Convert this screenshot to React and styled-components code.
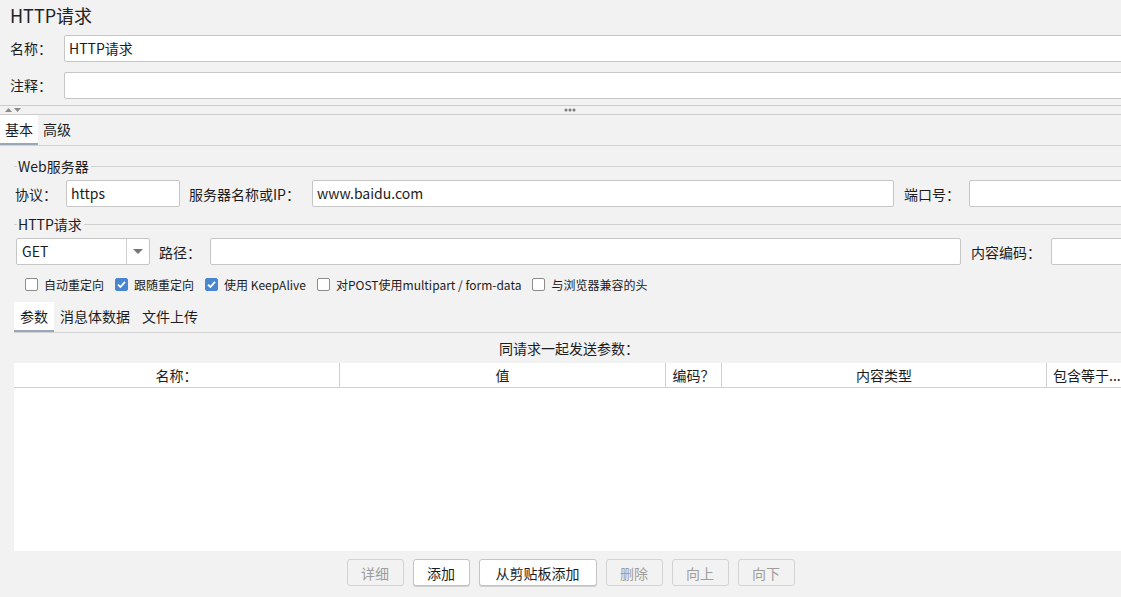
import React from 'react';
import styled, { createGlobalStyle } from 'styled-components';

const GlobalStyle = createGlobalStyle`
	html, body {
		margin: 0;
		padding: 0;
		background: #f2f2f2;
		overflow: hidden;
	}
	body {
		font-family: 'Noto Sans CJK SC', 'Noto Sans', sans-serif;
		color: #1c1c1c;
	}
`;

function Check({ checked }) {
	return (
		<CheckBox checked={checked}>
			{checked && (
				<svg width="11" height="11" viewBox="0 0 11 11">
					<path d="M2 5.6 L4.4 8 L9 2.8" fill="none" stroke="#fff" strokeWidth="1.8" />
				</svg>
			)}
		</CheckBox>
	);
}

function App() {
	return (
		<Page>
			<GlobalStyle />
			<Title>HTTP请求</Title>
			<FieldRow $top={5}>
				<FieldLabel>名称：</FieldLabel>
				<TextBox $grow>HTTP请求</TextBox>
			</FieldRow>
			<FieldRow $top={10}>
				<FieldLabel>注释：</FieldLabel>
				<TextBox $grow />
			</FieldRow>

			<Splitter>
				<Arrows>
					<svg width="20" height="6" viewBox="0 0 20 6">
						<path d="M2 5 L5.5 1 L9 5 Z" fill="#8a8a8a" />
						<path d="M11 1 L14.5 5 L18 1 Z" fill="#8a8a8a" />
					</svg>
				</Arrows>
				<Dots>
					<svg width="12" height="4" viewBox="0 0 12 4">
						<circle cx="2" cy="2" r="1.5" fill="#7a7a7a" />
						<circle cx="6" cy="2" r="1.5" fill="#7a7a7a" />
						<circle cx="10" cy="2" r="1.5" fill="#7a7a7a" />
					</svg>
				</Dots>
			</Splitter>

			<TabBar>
				<Tab $active>基本</Tab>
				<Tab>高级</Tab>
			</TabBar>

			<Body>
				<Legend $top={10}>Web服务器</Legend>
				<Row>
					<Label $w={52}>协议：</Label>
					<TextBox $w={114}>https</TextBox>
					<Label $w={124} $gap={8}>服务器名称或IP：</Label>
					<TextBox $grow>www.baidu.com</TextBox>
					<Label $w={66} $gap={9}>端口号：</Label>
					<TextBox $w={155} />
				</Row>

				<Legend $top={7}>HTTP请求</Legend>
				<Row>
					<Select>
						<span>GET</span>
						<SelectArrow>
							<svg width="10" height="6" viewBox="0 0 10 6">
								<path d="M0 0 L10 0 L5 5 Z" fill="#777" />
							</svg>
						</SelectArrow>
					</Select>
					<Label $w={52} $gap={8}>路径：</Label>
					<TextBox $grow />
					<Label $w={81} $gap={9}>内容编码：</Label>
					<TextBox $w={73} />
				</Row>

				<Checks>
					<CheckItem><Check />自动重定向</CheckItem>
					<CheckItem><Check checked />跟随重定向</CheckItem>
					<CheckItem><Check checked />使用 KeepAlive</CheckItem>
					<CheckItem><Check />对POST使用multipart / form-data</CheckItem>
					<CheckItem><Check />与浏览器兼容的头</CheckItem>
				</Checks>

				<SubTabBar>
					<Tab $active>参数</Tab>
					<Tab>消息体数据</Tab>
					<Tab>文件上传</Tab>
				</SubTabBar>

				<Caption>同请求一起发送参数：</Caption>

				<Table>
					<HeaderRow>
						<HeadCell>名称：</HeadCell>
						<HeadCell>值</HeadCell>
						<HeadCell>编码？</HeadCell>
						<HeadCell>内容类型</HeadCell>
						<HeadCell $left>包含等于...</HeadCell>
					</HeaderRow>
					<TableBody />
				</Table>

				<Buttons>
					<Button disabled>详细</Button>
					<Button>添加</Button>
					<Button $wide>从剪贴板添加</Button>
					<Button disabled>删除</Button>
					<Button disabled>向上</Button>
					<Button disabled>向下</Button>
				</Buttons>
			</Body>
		</Page>
	);
}

const Page = styled.div`
	width: 1121px;
	height: 597px;
	overflow: hidden;
	background: #f2f2f2;
	font-size: 14px;
`;

const Title = styled.div`
	height: 30px;
	line-height: 30px;
	padding-left: 10px;
	font-size: 18px;
	color: #222;
`;

const FieldRow = styled.div`
	display: flex;
	align-items: center;
	margin-top: ${(p) => p.$top}px;
	margin-right: -4px;
`;

const FieldLabel = styled.div`
	width: 54px;
	padding-left: 10px;
	flex-shrink: 0;
	line-height: 27px;
`;

const TextBox = styled.div`
	box-sizing: border-box;
	height: 27px;
	line-height: 25px;
	padding: 0 4px;
	background: #fff;
	border: 1px solid #c6c6c6;
	border-radius: 2px;
	white-space: nowrap;
	flex: ${(p) => (p.$grow ? '1 1 0' : '0 0 auto')};
	width: ${(p) => (p.$w ? `${p.$w}px` : 'auto')};
	min-width: 0;
`;

const Splitter = styled.div`
	position: relative;
	margin-top: 6px;
	height: 8px;
	border-top: 1px solid #cbcbcb;
	border-bottom: 1px solid #cbcbcb;
	display: flex;
	align-items: center;
	justify-content: center;
`;

const Arrows = styled.div`
	position: absolute;
	left: 3px;
	top: 1px;
	display: flex;
`;

const Dots = styled.div`
	display: flex;
	margin-left: 18px;
`;

const TabBar = styled.div`
	display: flex;
	height: 30px;
	border-bottom: 1px solid #d2d2d2;
`;

const Tab = styled.div`
	box-sizing: border-box;
	height: 30px;
	line-height: 28px;
	padding: 0 5px;
	background: ${(p) => (p.$active ? '#fff' : 'transparent')};
	border-bottom: 2px solid ${(p) => (p.$active ? '#9ba6b8' : 'transparent')};
	font-size: 14px;
`;

const Body = styled.div`
	padding-left: 14px;
	margin-right: -3px;
`;

const Legend = styled.div`
	display: flex;
	align-items: center;
	height: 20px;
	margin-top: ${(p) => p.$top}px;
	font-size: 14px;
	color: #1c1c1c;

	&::before {
		content: '';
		width: 3px;
		border-top: 1px solid #d0d0d0;
		margin-right: 1px;
	}
	&::after {
		content: '';
		flex: 1;
		border-top: 1px solid #d0d0d0;
		margin-left: 2px;
	}
`;

const Row = styled.div`
	display: flex;
	align-items: center;
	margin-top: 4px;
`;

const Label = styled.div`
	box-sizing: border-box;
	flex-shrink: 0;
	width: ${(p) => p.$w}px;
	margin-left: ${(p) => p.$gap || 0}px;
	padding-left: 1px;
	white-space: nowrap;
	font-size: 14px;
`;

const Select = styled.div`
	box-sizing: border-box;
	display: flex;
	align-items: stretch;
	width: 134px;
	height: 27px;
	margin-left: 2px;
	background: #fff;
	border: 1px solid #c6c6c6;
	border-radius: 2px;
	flex-shrink: 0;

	span {
		flex: 1;
		line-height: 25px;
		padding-left: 5px;
	}
`;

const SelectArrow = styled.div`
	width: 22px;
	border-left: 1px solid #d0d0d0;
	display: flex;
	align-items: center;
	justify-content: center;
`;

const Checks = styled.div`
	display: flex;
	align-items: center;
	gap: 11px;
	height: 20px;
	margin-top: 9px;
	padding-left: 11px;
	font-size: 12px;
	white-space: nowrap;
`;

const CheckItem = styled.label`
	display: flex;
	align-items: center;
	gap: 6px;
`;

const CheckBox = styled.span`
	box-sizing: border-box;
	width: 13px;
	height: 13px;
	border-radius: 2px;
	border: 1px solid ${(p) => (p.checked ? '#4a86cf' : '#8c8c8c')};
	background: ${(p) => (p.checked ? '#4a86cf' : '#fff')};
	display: flex;
	align-items: center;
	justify-content: center;
`;

const SubTabBar = styled(TabBar)`
	margin-top: 8px;

	${Tab} {
		padding: 0 6px;
	}
`;

const Caption = styled.div`
	text-align: center;
	height: 20px;
	line-height: 20px;
	margin-top: 5px;
	font-size: 14px;
`;

const Table = styled.div`
	margin-top: 5px;
	background: #fff;
`;

const HeaderRow = styled.div`
	display: grid;
	grid-template-columns: 326px 326px 56px 325px 1fr;
	height: 25px;
	border-bottom: 1px solid #d0d0d0;
	box-sizing: border-box;
`;

const HeadCell = styled.div`
	line-height: 24px;
	text-align: ${(p) => (p.$left ? 'left' : 'center')};
	padding-left: ${(p) => (p.$left ? 6 : 0)}px;
	border-right: 1px solid #d0d0d0;
	white-space: nowrap;
	overflow: hidden;
	font-size: 14px;

	&:last-child {
		border-right: none;
	}
`;

const TableBody = styled.div`
	height: 163px;
`;

const Buttons = styled.div`
	display: flex;
	justify-content: center;
	gap: 9px;
	margin-top: 8px;
	padding-left: 3px;
`;

const Button = styled.button`
	box-sizing: border-box;
	height: 27px;
	min-width: 57px;
	padding: 0 ${(p) => (p.$wide ? 16 : 12)}px;
	font-family: inherit;
	font-size: 14px;
	border-radius: 3px;
	border: 1px solid ${(p) => (p.disabled ? '#d3d3d3' : '#c4c4c4')};
	background: ${(p) => (p.disabled ? '#f2f2f2' : '#fff')};
	color: ${(p) => (p.disabled ? '#9d9d9d' : '#1c1c1c')};
	box-shadow: ${(p) => (p.disabled ? 'none' : '0 1px 0 #cfcfcf')};
`;

export default App;
